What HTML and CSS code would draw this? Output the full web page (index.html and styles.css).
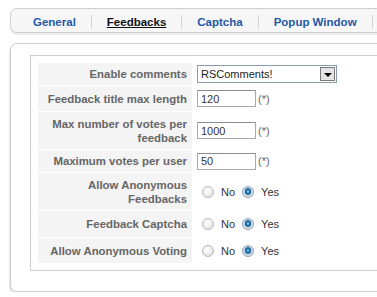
FILE: index.html
```html
<!DOCTYPE html>
<html>
<head>
<meta charset="utf-8">
<link rel="stylesheet" href="styles.css">
</head>
<body>
<div class="page">
  <ul class="tabs">
    <li class="tab"><a>General</a></li>
    <li class="tab active"><a>Feedbacks</a></li>
    <li class="tab"><a>Captcha</a></li>
    <li class="tab"><a>Popup Window</a></li>
  </ul>
  <div class="panel">
    <div class="fieldset">
      <div class="form">
        <div class="key">Enable comments</div>
        <div class="val">
          <div class="select"><span class="select-value">RSComments!</span><span class="select-btn"><span class="arrow"></span></span></div>
        </div>

        <div class="key">Feedback title max length</div>
        <div class="val"><input class="text" type="text" value="120"><span class="req">(*)</span></div>

        <div class="key">Max number of votes per feedback</div>
        <div class="val"><input class="text" type="text" value="1000"><span class="req">(*)</span></div>

        <div class="key">Maximum votes per user</div>
        <div class="val"><input class="text" type="text" value="50"><span class="req">(*)</span></div>

        <div class="key">Allow Anonymous Feedbacks</div>
        <div class="val">
          <label class="opt"><input type="radio" name="anonfb">No</label>
          <label class="opt"><input type="radio" name="anonfb" checked>Yes</label>
        </div>

        <div class="key">Feedback Captcha</div>
        <div class="val">
          <label class="opt"><input type="radio" name="captcha">No</label>
          <label class="opt"><input type="radio" name="captcha" checked>Yes</label>
        </div>

        <div class="key">Allow Anonymous Voting</div>
        <div class="val">
          <label class="opt"><input type="radio" name="anonvote">No</label>
          <label class="opt"><input type="radio" name="anonvote" checked>Yes</label>
        </div>
      </div>
    </div>
  </div>
</div>
</body>
</html>
```

FILE: styles.css
```css
html, body {
  margin: 0;
  padding: 0;
  background: #fff;
  overflow: hidden;
}

body {
  font-family: "Liberation Sans", Arial, sans-serif;
  color: #333;
}

.page {
  width: 440px;
  padding: 8px 0 0 10px;
}

.tabs {
  list-style: none;
  margin: 0;
  padding: 6px 0 3px 7px;
  display: flex;
  background: #f7f7f7;
  border: 1px solid #cfcfcf;
  border-radius: 7px 0 0 7px;
  box-shadow: 0 2px 1px #ececec;
}

.tab {
  padding: 0 15px;
  border-right: 1px solid #d6d6d6;
  font-size: 11.5px;
  font-weight: bold;
  line-height: 14px;
  height: 14px;
}

.tab a {
  color: #2458a8;
  text-decoration: none;
}

.tab.active a {
  color: #111;
  text-decoration: underline;
}

.panel {
  margin-top: 10px;
  border: 1px solid #cfcfcf;
  border-radius: 7px 0 0 7px;
  padding: 11px 0 20px 19px;
  background: #fff;
  box-shadow: -1px 2px 1px #e6e6e6;
}

.fieldset {
  border: 1px solid #cfcfcf;
  border-right: none;
  padding: 7px 0 7px 7px;
}

.form {
  display: grid;
  grid-template-columns: 154px 1fr;
  grid-template-rows: 22px 25px 37px 22px 37px 26px 25px;
  column-gap: 2px;
  row-gap: 1px;
}

.key {
  background: #f4f4f4;
  color: #666;
  font-size: 11.4px;
  font-weight: bold;
  line-height: 14px;
  text-align: right;
  padding: 0 5px 0 4px;
  display: flex;
  align-items: center;
  justify-content: flex-end;
}

.val {
  display: flex;
  align-items: center;
  padding-left: 3px;
  font-size: 11px;
}

.select {
  box-sizing: border-box;
  width: 140px;
  height: 18px;
  border: 1px solid #8a9bb0;
  display: flex;
  align-items: center;
  background: #fff;
}

.select-value {
  padding-left: 3px;
  font-size: 11px;
  color: #222;
}

.select-btn {
  box-sizing: border-box;
  margin-left: auto;
  margin-right: 1px;
  width: 15px;
  height: 14px;
  background: #e4e4e4;
  border: 1px solid #7a7a7a;
  display: flex;
  align-items: center;
  justify-content: center;
}

.arrow {
  width: 0;
  height: 0;
  border-left: 4px solid transparent;
  border-right: 4px solid transparent;
  border-top: 4px solid #000;
  margin-top: 1px;
}

.text {
  box-sizing: border-box;
  width: 59px;
  height: 17px;
  margin: 0;
  padding: 0 0 0 3px;
  border: 1px solid #a9a9a9;
  border-top-color: #8c8c8c;
  font-family: "Liberation Sans", Arial, sans-serif;
  font-size: 11px;
  color: #333;
  background: #fff;
}

.req {
  margin-left: 2px;
  color: #666;
  font-size: 11px;
}

.opt {
  display: flex;
  align-items: center;
  color: #333;
  font-size: 11px;
  margin-right: 2px;
}

.opt input {
  -webkit-appearance: none;
  appearance: none;
  box-sizing: border-box;
  width: 12px;
  height: 12px;
  margin: 0 7px 0 5px;
  border-radius: 50%;
  border: 1px solid #b8b8b8;
  background: radial-gradient(circle at 40% 35%, #ffffff 0, #f2f2f2 40%, #d8d8d8 100%);
}

.opt input:checked {
  border-color: #8fa4b4;
  background: radial-gradient(circle at 50% 45%, #8fd0f2 0, #2d86c0 1.5px, #1a5a8c 3px, #c7d7e3 3.6px, #e8eef3 100%);
}
```
